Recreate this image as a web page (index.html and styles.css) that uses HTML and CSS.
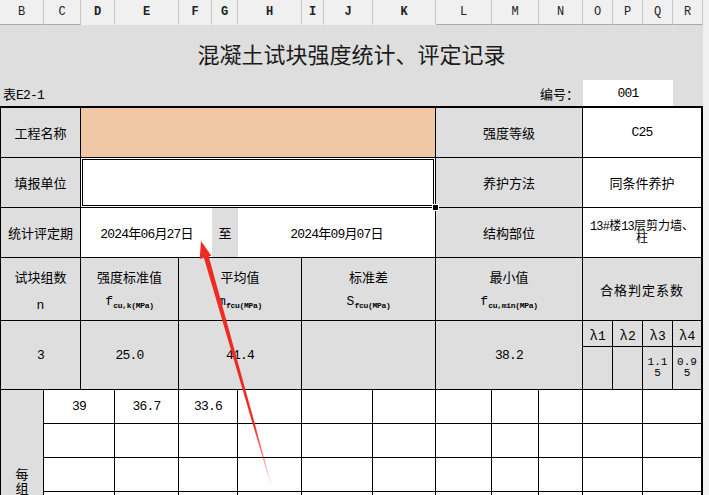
FILE: index.html
```html
<!DOCTYPE html>
<html lang="zh">
<head>
<meta charset="utf-8">
<title>混凝土试块强度统计、评定记录</title>
<link rel="stylesheet" href="styles.css">
</head>
<body>
<div class="app">
  <div class="sheet">
    <div class="colhead">
      <div class="ch">B</div><div class="ch">C</div><div class="ch sel">D</div><div class="ch sel">E</div>
      <div class="ch sel">F</div><div class="ch sel">G</div><div class="ch sel">H</div><div class="ch sel">I</div>
      <div class="ch sel">J</div><div class="ch sel">K</div><div class="ch">L</div><div class="ch">M</div>
      <div class="ch">N</div><div class="ch">O</div><div class="ch">P</div><div class="ch">Q</div><div class="ch">R</div>
    </div>
    <div class="title">混凝土试块强度统计、评定记录</div>
    <div class="info">
      <div class="form-no"><span>表<span class="num">E2-1</span></span></div>
      <div class="no-label">编号：</div>
      <div class="no-val num">001</div>
      <div></div>
    </div>
    <div class="grid">
      <!-- row 1 -->
      <div class="c s2">工程名称</div>
      <div class="c s8 peach"></div>
      <div class="c s3">强度等级</div>
      <div class="c s4 w num">C25</div>
      <!-- row 2 -->
      <div class="c s2">填报单位</div>
      <div class="c s8 w selected"><span class="handle"></span></div>
      <div class="c s3">养护方法</div>
      <div class="c s4 w">同条件养护</div>
      <!-- row 3 -->
      <div class="c s2">统计评定期</div>
      <div class="c s3 w nob num">2024年06月27日</div>
      <div class="c nob">至</div>
      <div class="c s4 w num">2024年09月07日</div>
      <div class="c s3">结构部位</div>
      <div class="c s4 w wrap"><span class="txt"><span class="num">13#</span>楼<span class="num">13</span>层剪力墙、柱</span></div>
      <!-- row 4 -->
      <div class="c s2 hd"><span>试块组数</span><span class="f">n</span></div>
      <div class="c s2 hd"><span>强度标准值</span><span class="f">f<sub>cu,k(MPa)</sub></span></div>
      <div class="c s3 hd"><span>平均值</span><span class="f">m<sub>fcu(MPa)</sub></span></div>
      <div class="c s3 hd"><span>标准差</span><span class="f">S<sub>fcu(MPa)</sub></span></div>
      <div class="c s3 hd"><span>最小值</span><span class="f">f<sub>cu,min(MPa)</sub></span></div>
      <div class="c s4 spaced">合格判定系数</div>
      <!-- row 5/6 -->
      <div class="c s2 r2 num">3</div>
      <div class="c s2 r2 num">25.0</div>
      <div class="c s3 r2 num">41.4</div>
      <div class="c s3 r2"></div>
      <div class="c s3 r2 num">38.2</div>
      <div class="c lam"><span class="txt"><span class="lg">λ</span><span class="num">1</span></span></div>
      <div class="c lam"><span class="txt"><span class="lg">λ</span><span class="num">2</span></span></div>
      <div class="c lam"><span class="txt"><span class="lg">λ</span><span class="num">3</span></span></div>
      <div class="c lam"><span class="txt"><span class="lg">λ</span><span class="num">4</span></span></div>
      <div class="c"></div>
      <div class="c"></div>
      <div class="c small num"><span class="txt">1.1<br>5</span></div>
      <div class="c small num"><span class="txt">0.9<br>5</span></div>
      <!-- data rows -->
      <div class="c r4 side"><span class="vtext">每组强度值</span></div>
      <div class="c s2 w num">39</div><div class="c w num">36.7</div><div class="c s2 w num">33.6</div>
      <div class="c w"></div><div class="c s2 w"></div><div class="c w"></div><div class="c w"></div>
      <div class="c w"></div><div class="c w"></div><div class="c s2 w"></div><div class="c s2 w"></div>

      <div class="c s2 w"></div><div class="c w"></div><div class="c s2 w"></div>
      <div class="c w"></div><div class="c s2 w"></div><div class="c w"></div><div class="c w"></div>
      <div class="c w"></div><div class="c w"></div><div class="c s2 w"></div><div class="c s2 w"></div>

      <div class="c s2 w"></div><div class="c w"></div><div class="c s2 w"></div>
      <div class="c w"></div><div class="c s2 w"></div><div class="c w"></div><div class="c w"></div>
      <div class="c w"></div><div class="c w"></div><div class="c s2 w"></div><div class="c s2 w"></div>

      <div class="c s2 w"></div><div class="c w"></div><div class="c s2 w"></div>
      <div class="c w"></div><div class="c s2 w"></div><div class="c w"></div><div class="c w"></div>
      <div class="c w"></div><div class="c w"></div><div class="c s2 w"></div><div class="c s2 w"></div>
    </div>
  </div>
  <div class="scroll"></div>
  <svg class="arrow" viewBox="0 0 709 495" xmlns="http://www.w3.org/2000/svg">
    <defs>
      <linearGradient id="fade" gradientUnits="userSpaceOnUse" x1="206" y1="256" x2="272" y2="488">
        <stop offset="0" stop-color="#ee2a22" stop-opacity="1"/>
        <stop offset="0.72" stop-color="#ee2a22" stop-opacity="1"/>
        <stop offset="1" stop-color="#ee2a22" stop-opacity="0"/>
      </linearGradient>
    </defs>
    <polygon points="208.4,255.3 203.6,256.7 271.5,488.1 272.5,487.9" fill="url(#fade)"/>
    <polygon points="201,241 211.3,255.8 199.7,259.0" fill="#ee2a22"/>
  </svg>
</div>
</body>
</html>
```

FILE: styles.css
```css
html, body {
  margin: 0;
  padding: 0;
}

body {
  background: #dedede;
  width: 709px;
  height: 495px;
  overflow: hidden;
}

.app {
  position: relative;
  display: flex;
  width: 709px;
  height: 495px;
  overflow: hidden;
  font-family: "Liberation Mono", "Noto Sans CJK SC", monospace;
  color: #000;
}

.sheet {
  width: 703px;
  flex: none;
}

.scroll {
  flex: 1;
  background: #f0f0f0;
}

/* column header */
.colhead {
  display: grid;
  grid-template-columns: 44px 37px 34px 64px 33px 26px 64px 22px 49px 63px 56px 47px 44px 30px 30px 30px 30px;
  height: 25px;
}

.ch {
  background: #f0f0f0;
  border-right: 1px solid #c6c6c6;
  border-bottom: 1px solid #ababab;
  display: flex;
  align-items: center;
  justify-content: center;
  font-size: 12px;
  color: #222;
}

.ch.sel {
  font-weight: bold;
  border-bottom-color: #f0f0f0;
}

/* title */
.title {
  height: 55px;
  display: flex;
  align-items: center;
  justify-content: center;
  font-family: "Noto Sans CJK SC", sans-serif;
  font-size: 22px;
  color: #1a1a1a;
}

/* info row */
.info {
  display: grid;
  grid-template-columns: 436px 147px 90px 30px;
  height: 26px;
  font-size: 13px;
}

.form-no {
  display: flex;
  align-items: center;
  padding-left: 3px;
  font-family: "Noto Sans CJK SC", sans-serif;
}

.form-no .num {
  font-family: "Liberation Mono", monospace;
}

.no-label {
  display: flex;
  align-items: center;
  justify-content: flex-end;
  padding-right: 4px;
  font-family: "Noto Sans CJK SC", sans-serif;
}

.no-val {
  background: #fff;
  display: flex;
  align-items: center;
  justify-content: center;
}

/* main grid */
.grid {
  display: grid;
  grid-template-columns: 43px 37px 34px 64px 33px 26px 64px 22px 49px 63px 56px 47px 44px 30px 30px 30px 29px;
  grid-template-rows: 50px 50px 50px 63px 26px 43px;
  grid-auto-rows: 34px;
  border-top: 2px solid #000;
  border-left: 1px solid #000;
  border-right: 1px solid #000;
}

.c {
  position: relative;
  border-right: 1px solid #000;
  border-bottom: 1px solid #000;
  display: flex;
  align-items: center;
  justify-content: center;
  text-align: center;
  font-size: 13px;
  background: #dedede;
  overflow: hidden;
  min-width: 0;
}

.s2 { grid-column: span 2; }
.s3 { grid-column: span 3; }
.s4 { grid-column: span 4; }
.s8 { grid-column: span 8; }
.r2 { grid-row: span 2; }
.r4 { grid-row: span 4; }

.w { background: #fff; }
.peach { background: #f0c8a5; }
.nob { border-right: none; }

.num { letter-spacing: -0.8px; }

.txt {
  display: block;
}

.selected {
  overflow: visible;
  box-shadow: inset 0 0 0 1px #fff, inset 0 0 0 2px #000;
}

.handle {
  position: absolute;
  right: -4px;
  bottom: -4px;
  width: 5px;
  height: 5px;
  background: #000;
  border: 1px solid #fff;
  z-index: 2;
}

.wrap {
  font-size: 12px;
  line-height: 12px;
  padding: 0 4px;
}

.hd {
  flex-direction: column;
  justify-content: space-between;
  padding: 9px 0 6px;
}

.f {
  font-size: 13px;
  line-height: 16px;
}

.f sub {
  font-size: 8px;
  vertical-align: -3px;
  letter-spacing: -0.3px;
  font-weight: bold;
}

.spaced {
  letter-spacing: 1px;
}

.lam {
  align-items: flex-end;
  padding-bottom: 2px;
  font-size: 13px;
  line-height: 14px;
}

.lg {
  font-family: "Noto Sans CJK SC", sans-serif;
  font-size: 13px;
  margin-right: 1px;
}

.small {
  font-size: 11px;
  line-height: 11px;
  letter-spacing: 0;
}

.side {
  align-items: flex-start;
  padding-top: 78px;
}

.vtext {
  writing-mode: vertical-rl;
  text-orientation: upright;
  white-space: nowrap;
  font-family: "Noto Sans CJK SC", sans-serif;
  font-size: 13px;
  letter-spacing: 1px;
}

.arrow {
  position: absolute;
  left: 0;
  top: 0;
  width: 709px;
  height: 495px;
  pointer-events: none;
}
```
